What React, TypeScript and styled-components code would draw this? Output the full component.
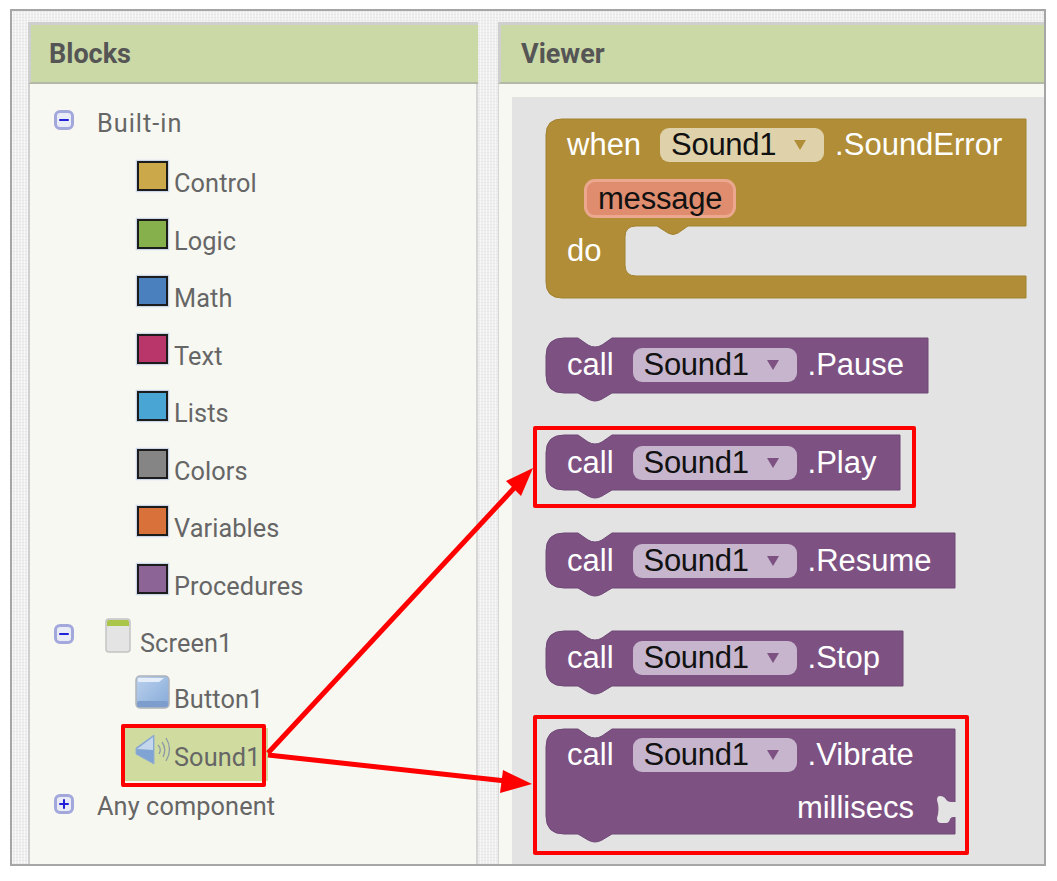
import React from 'react'
import styled, { createGlobalStyle } from 'styled-components'

const GlobalStyle = createGlobalStyle`
  html, body {
    margin: 0;
    padding: 0;
    background: #fff;
  }
`

const Frame = styled.div`
  position: relative;
  box-sizing: border-box;
  width: 1036px;
  height: 857px;
  margin: 9px 0 0 10px;
  padding: 11px 0 0 16px;
  display: flex;
  gap: 20px;
  border: 2px solid #a6a6a6;
  background-color: #efefef;
  background-image:
    repeating-linear-gradient(90deg, rgba(255, 255, 255, 0.5) 0 1px, transparent 1px 3px),
    repeating-linear-gradient(0deg, rgba(215, 215, 215, 0.35) 0 1px, transparent 1px 3px);
`

const Panel = styled.section<{ $width: number }>`
  width: ${p => p.$width}px;
  flex: none;
  display: flex;
  flex-direction: column;
  font-family: Roboto, "Liberation Sans", sans-serif;
`

const PanelHeader = styled.header<{ $pad: number }>`
  box-sizing: border-box;
  height: 62px;
  padding: 0 0 0 ${p => p.$pad}px;
  display: flex;
  align-items: center;
  border-top: 3px solid #cfcfcf;
  border-left: 3px solid #cfcfcf;
  border-bottom: 2px solid #b4b8a6;
  background: #cbd9a7;
  color: #555;
  font-size: 27px;
  font-weight: 700;
`

const TreeBody = styled.div`
  flex: 1;
  box-sizing: border-box;
  padding-top: 27px;
  border-left: 2px solid #cfcfcf;
  border-right: 2px solid #d6d6d6;
  background: #f7f8f2;
`

const Row = styled.div<{ $indent: number; $height?: number }>`
  position: relative;
  display: flex;
  align-items: flex-start;
  height: ${p => p.$height ?? 57.55}px;
  padding-left: ${p => p.$indent}px;
  color: #666;
  font-size: 25.3px;
  line-height: 29px;
  letter-spacing: 0.1px;
`

const RowLabel = styled.span<{ $gap: number; $top: number; $tracking?: number }>`
  position: relative;
  margin-left: ${p => p.$gap}px;
  margin-top: ${p => p.$top}px;
  letter-spacing: ${p => p.$tracking ?? 0.1}px;
`

const Toggle = styled.span<{ $top?: number }>`
  box-sizing: border-box;
  flex: none;
  position: relative;
  width: 20px;
  height: 20px;
  margin-top: ${p => p.$top ?? 0}px;
  display: flex;
  align-items: center;
  justify-content: center;
  border: 3px solid #a3a8dc;
  border-radius: 6px;
  background: #e9ebf7;
`

const ToggleBar = styled.i<{ $vertical?: boolean }>`
  position: absolute;
  width: ${p => (p.$vertical ? 2 : 10)}px;
  height: ${p => (p.$vertical ? 10 : 2)}px;
  border-radius: 1px;
  background: #2020d8;
`

const Swatch = styled.span<{ $color: string }>`
  box-sizing: border-box;
  flex: none;
  width: 31px;
  height: 30px;
  border: 2px solid #1c1c1c;
  box-shadow: 0 0 1px 1px rgba(170, 190, 225, 0.55);
  background: ${p => p.$color};
`

const ComponentIcon = styled.svg<{ $gap?: number }>`
  flex: none;
  position: relative;
  margin-left: ${p => p.$gap ?? 0}px;
`

const SelectedRow = styled.div`
  position: absolute;
  left: 94px;
  top: -5px;
  width: 144px;
  height: 53px;
  background: #d0dc9f;
`

const RedBox = styled.div<{ $top: number; $right: number; $bottom: number; $left: number }>`
  position: absolute;
  top: ${p => p.$top}px;
  right: ${p => p.$right}px;
  bottom: ${p => p.$bottom}px;
  left: ${p => p.$left}px;
  border: 4px solid #fe0000;
  border-radius: 2px;
  pointer-events: none;
`

const ViewerBody = styled.div`
  flex: 1;
  display: flex;
  flex-direction: column;
  min-height: 0;
  border-left: 1px solid #d6d6d6;
  background: #f7f8f2;
`

const Canvas = styled.div`
  flex: 1;
  box-sizing: border-box;
  margin: 13px 0 0 13px;
  padding: 22px 0 0 34px;
  display: flex;
  flex-direction: column;
  gap: 42.75px;
  background: #e3e3e3;
  font-family: "Liberation Sans", Arial, sans-serif;
  font-size: 31px;
  color: #fff;
`

const BlockShell = styled.div<{ $width: number; $height: number; $after?: number }>`
  position: relative;
  flex: none;
  width: ${p => p.$width}px;
  height: ${p => p.$height}px;
  margin-bottom: ${p => p.$after ?? 0}px;
`

const BlockShape = styled.svg`
  position: absolute;
  inset: 0;
  overflow: visible;
`

const BlockContent = styled.div`
  position: relative;
  display: flex;
  flex-direction: column;
  padding-left: 21px;
`

const BlockRow = styled.div<{ $height: number; $end?: boolean; $pad?: number }>`
  height: ${p => p.$height}px;
  display: flex;
  align-items: center;
  justify-content: ${p => (p.$end ? 'flex-end' : 'flex-start')};
  padding-right: ${p => p.$pad ?? 0}px;
  white-space: nowrap;
`

const Dropdown = styled.span<{ $bg: string; $arrow: string }>`
  box-sizing: border-box;
  display: inline-flex;
  align-items: center;
  justify-content: space-between;
  flex: none;
  width: 164px;
  height: 34px;
  margin: 0 11px 0 19px;
  padding: 0 18px 0 11px;
  border-radius: 9px;
  background: ${p => p.$bg};
  color: #111;
  letter-spacing: -0.3px;
  &::after {
    content: '';
    border-left: 6px solid transparent;
    border-right: 6px solid transparent;
    border-top: 10px solid ${p => p.$arrow};
  }
`

const ParamPill = styled.span`
  box-sizing: border-box;
  display: inline-flex;
  align-items: center;
  height: 39px;
  margin-left: 17px;
  padding: 0 11px;
  border: 3px solid #eba88f;
  border-radius: 11px;
  background: #e08d6f;
  color: #111;
  letter-spacing: -0.2px;
`

const ArrowLayer = styled.svg`
  position: absolute;
  left: -12px;
  top: -11px;
  width: 1057px;
  height: 881px;
  overflow: visible;
  pointer-events: none;
`

// Outline of a statement block: rounded left side, notch on top and bottom
const callPath = (w: number, h: number) =>
  `M18 0 H32 L42 7 Q49 11 56 7 L66 0 H${w} V${h} H66 L56 ${h + 6} Q49 ${h + 10} 42 ${h + 6} L32 ${h} H18 Q0 ${h} 0 ${h - 18} V18 Q0 0 18 0 Z`

const whenPath = (w: number) =>
  `M16 0 H${w} V107 H142 L132 114 Q127 117 122 114 L111 107 H90 Q79 107 79 118 V146 Q79 157 90 157 H${w} V179 H16 Q0 179 0 163 V16 Q0 0 16 0 Z`

// Value socket cut into the right edge of the Vibrate block
const socketPath = (w: number) =>
  `M${w} 73 H${w - 5} Q${w - 9} 73 ${w - 11} 69 Q${w - 13} 67 ${w - 16} 67 Q${w - 19} 67 ${w - 19} 71 Q${w - 16} 80 ${w - 19} 89 Q${w - 19} 94 ${w - 15} 94 H${w - 10} Q${w - 7} 94 ${w - 6} 90 Q${w - 5} 88 ${w - 3} 88 H${w} Z`

const CallBlock = ({ width, name, highlight }: { width: number; name: string; highlight?: boolean }) => (
  <BlockShell $width={width} $height={55}>
    <BlockShape width={width} height={63}>
      <path d={callPath(width, 55)} fill="#7d5283" stroke="#6f4876" strokeWidth="1" />
    </BlockShape>
    <BlockContent>
      <BlockRow $height={55}>
        call
        <Dropdown $bg="#c6b5cc" $arrow="#7d5283">Sound1</Dropdown>
        {name}
      </BlockRow>
    </BlockContent>
    {highlight && <RedBox $top={-9.5} $right={-16} $bottom={-17.5} $left={-13} />}
  </BlockShell>
)

const categories = [
  { label: 'Control', color: '#cba849' },
  { label: 'Logic', color: '#85b04c' },
  { label: 'Math', color: '#4a80bd' },
  { label: 'Text', color: '#b9366b' },
  { label: 'Lists', color: '#49a6d4' },
  { label: 'Colors', color: '#858585' },
  { label: 'Variables', color: '#d9713b' },
  { label: 'Procedures', color: '#8d6496' },
]

const App = () => {
  return (
    <>
      <GlobalStyle />
      <Frame>
        <Panel $width={450}>
          <PanelHeader $pad={18}>Blocks</PanelHeader>
          <TreeBody>
            <Row $indent={24} $height={50}>
              <Toggle $top={-1}><ToggleBar /></Toggle>
              <RowLabel $gap={23} $top={-2} $tracking={1}>Built-in</RowLabel>
            </Row>
            {categories.map(c => (
              <Row key={c.label} $indent={107} $height={c.label === 'Procedures' ? 54.5 : undefined}>
                <Swatch $color={c.color} />
                <RowLabel $gap={6} $top={8}>{c.label}</RowLabel>
              </Row>
            ))}
            <Row $indent={24} $height={57}>
              <Toggle $top={6}><ToggleBar /></Toggle>
              <ComponentIcon $gap={31} width="26" height="35" viewBox="0 0 26 35">
                <rect x="1" y="1" width="24" height="33" rx="3" fill="#e4e4e4" stroke="#c4c4c4" strokeWidth="1.5" />
                <path d="M2 8 V4 Q2 2 4 2 H22 Q24 2 24 4 V8 Z" fill="#a9c64b" />
              </ComponentIcon>
              <RowLabel $gap={9} $top={11}>Screen1</RowLabel>
            </Row>
            <Row $indent={105} $height={58}>
              <ComponentIcon width="35" height="34" viewBox="0 0 35 34">
                <defs>
                  <linearGradient id="btnFill" x1="0" y1="0" x2="1" y2="1">
                    <stop offset="0" stopColor="#bcd2ee" />
                    <stop offset="1" stopColor="#85a9d8" />
                  </linearGradient>
                </defs>
                <rect x="1" y="1" width="33" height="32" rx="4" fill="url(#btnFill)" stroke="#b0b3b8" strokeWidth="1.5" />
                <path d="M3 3 H29 L24 7 H3 Z" fill="#e4edf8" />
                <rect x="2" y="26" width="31" height="6" rx="2" fill="#7d9ecc" />
              </ComponentIcon>
              <RowLabel $gap={4} $top={10}>Button1</RowLabel>
            </Row>
            <Row $indent={105} $height={62.4}>
              <SelectedRow />
              <ComponentIcon width="36" height="36" viewBox="0 0 36 36">
                <path d="M1 15 L19 2 V31 L1 21 Z" fill="#7fa3d2" stroke="#93aed2" strokeWidth="1" />
                <path d="M2 16 L18 4 V17 Z" fill="#c4d6ec" />
                <path d="M23 12 Q27 16 24 21 M27 9 Q32 16 28 24 M31 5 Q38 16 31 28" fill="none" stroke="#8c9aa8" strokeWidth="1.3" />
              </ComponentIcon>
              <RowLabel $gap={3} $top={10}>Sound1</RowLabel>
              <RedBox $top={-9} $right={210} $bottom={9} $left={91} />
            </Row>
            <Row $indent={24}>
              <Toggle $top={-2}><ToggleBar /><ToggleBar $vertical /></Toggle>
              <RowLabel $gap={23} $top={-4}>Any component</RowLabel>
            </Row>
          </TreeBody>
        </Panel>

        <Panel $width={546}>
          <PanelHeader $pad={20}>Viewer</PanelHeader>
          <ViewerBody>
            <Canvas>
              <BlockShell $width={480} $height={179} $after={-3.25}>
                <BlockShape width={480} height={179}>
                  <path d={whenPath(480)} fill="#b08d36" stroke="#a28230" strokeWidth="1" />
                </BlockShape>
                <BlockContent>
                  <BlockRow $height={52}>
                    when
                    <Dropdown $bg="#dfd2ab" $arrow="#b08d36">Sound1</Dropdown>
                    .SoundError
                  </BlockRow>
                  <BlockRow $height={55}>
                    <ParamPill>message</ParamPill>
                  </BlockRow>
                  <BlockRow $height={50}>do</BlockRow>
                </BlockContent>
              </BlockShell>
              <CallBlock width={382} name=".Pause" />
              <CallBlock width={354} name=".Play" highlight />
              <CallBlock width={409} name=".Resume" />
              <CallBlock width={357} name=".Stop" />
              <BlockShell $width={409} $height={105}>
                <BlockShape width={409} height={113}>
                  <path d={callPath(409, 105)} fill="#7d5283" stroke="#6f4876" strokeWidth="1" />
                  <path d={socketPath(410)} fill="#e3e3e3" />
                </BlockShape>
                <BlockContent>
                  <BlockRow $height={53}>
                    call
                    <Dropdown $bg="#c6b5cc" $arrow="#7d5283">Sound1</Dropdown>
                    .Vibrate
                  </BlockRow>
                  <BlockRow $height={53} $end $pad={41}>millisecs</BlockRow>
                </BlockContent>
                <RedBox $top={-14} $right={-14} $bottom={-21} $left={-13} />
              </BlockShell>
            </Canvas>
          </ViewerBody>
        </Panel>

        <ArrowLayer viewBox="0 0 1057 881">
          <path d="M268 753 L516 486" stroke="#fe0000" strokeWidth="5" fill="none" />
          <path d="M533 468 L506 481 L521 496 Z" fill="#fe0000" />
          <path d="M268 755 L506 781" stroke="#fe0000" strokeWidth="5" fill="none" />
          <path d="M532 784 L503 770 L500 793 Z" fill="#fe0000" />
        </ArrowLayer>
      </Frame>
    </>
  )
}

export default App
